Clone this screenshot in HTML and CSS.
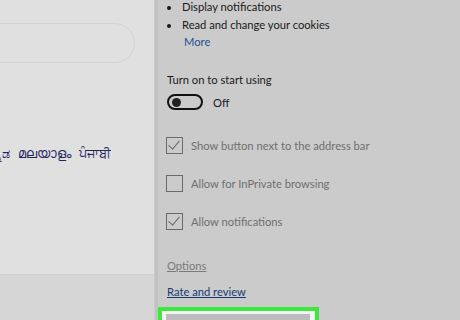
FILE: index.html
```html
<!DOCTYPE html>
<html lang="en">
<head>
  <meta charset="UTF-8">
  <title>Extension details</title>
  <link rel="stylesheet" href="styles.css">
</head>
<body>
  <div id="page">
    <div class="search"></div>
    <div class="langs">
      <a>ಕನ್ನಡ</a>
      <a>മലയാളം</a>
      <a>ਪੰਜਾਬੀ</a>
    </div>
    <div class="footer"></div>
  </div>

  <div class="divider"></div>

  <div id="panel">
    <ul class="perms">
      <li>Display notifications</li>
      <li>Read and change your cookies</li>
    </ul>
    <a class="more">More</a>

    <p class="label">Turn on to start using</p>
    <div class="toggle-row">
      <span class="toggle"><span class="knob"></span></span>
      <span>Off</span>
    </div>

    <div class="checks">
      <label class="check on"><span class="box"></span>Show button next to the address bar</label>
      <label class="check"><span class="box"></span>Allow for InPrivate browsing</label>
      <label class="check on"><span class="box"></span>Allow notifications</label>
    </div>

    <a class="options">Options</a>
    <a class="rate">Rate and review</a>

    <div class="highlight"><div class="btn"></div></div>
  </div>
</body>
</html>
```

FILE: styles.css
```css
body { margin: 0; height: 320px; overflow: hidden; display: flex; font-family: Lato, "Noto Sans", sans-serif; font-size: 11.2px; }

#page { width: 154px; background: #e0e0e0; display: flex; flex-direction: column; overflow: hidden; }
.search { margin: 23px 0 0 -30px; width: 163px; height: 38px; border: 1px solid #d3d3d3; border-radius: 20px; flex-shrink: 0; }
.langs { width: 111px; margin-top: 81px; display: flex; justify-content: flex-end; gap: 8px; white-space: nowrap; overflow: hidden; font-family: "Noto Sans", sans-serif; font-size: 13px; color: #23235c; }
.langs a { flex-shrink: 0; }
.footer { margin-top: auto; height: 45px; background: #d6d6d6; border-top: 1px solid #cfcfcf; }

.divider { width: 3px; background: #c2c2c2; border-left: 1px solid #cacaca; }

#panel { flex: 1; background: #cbcbcb; padding-left: 9px; color: #1a1a1a; overflow: hidden; }
.perms { margin: -2px 0 0; padding-left: 14px; line-height: 18px; }
.perms li { padding-left: 1px; }
.more { display: block; margin-left: 17px; color: #1d4f8c; line-height: 16px; }

.label { margin: 21px 0 0; line-height: 18px; }
.toggle-row { display: flex; align-items: center; gap: 10px; margin-top: 5px; }
.toggle { width: 29px; height: 12px; border: 2px solid #111; border-radius: 9px; display: flex; align-items: center; padding-left: 3px; box-sizing: content-box; }
.knob { width: 9px; height: 9px; border-radius: 50%; background: #222; }

.checks { margin-top: 26px; display: flex; flex-direction: column; gap: 20px; color: #6f6f6f; }
.check { display: flex; align-items: center; gap: 8px; height: 18px; }
.box { width: 15px; height: 15px; border: 1px solid #6a6a6a; position: relative; flex-shrink: 0; margin-left: -1px; }
.check.on .box::after { content: ""; position: absolute; left: 4px; top: 0; width: 5px; height: 10px; border: solid #6a6a6a; border-width: 0 1px 1px 0; transform: rotate(40deg); }

.options { display: block; margin-top: 27px; color: #7a7a7a; text-decoration: underline; line-height: 18px; }
.rate { display: block; margin-top: 8px; color: #173a73; text-decoration: underline; line-height: 18px; }

.highlight { margin: 6px 0 0 -9px; width: 161px; height: 30px; box-sizing: border-box; border: 4px solid #3be83b; background: #f4f4f4; padding: 3px 5px 0 4px; }
.btn { height: 100%; background: #bdbdbd; }
```
